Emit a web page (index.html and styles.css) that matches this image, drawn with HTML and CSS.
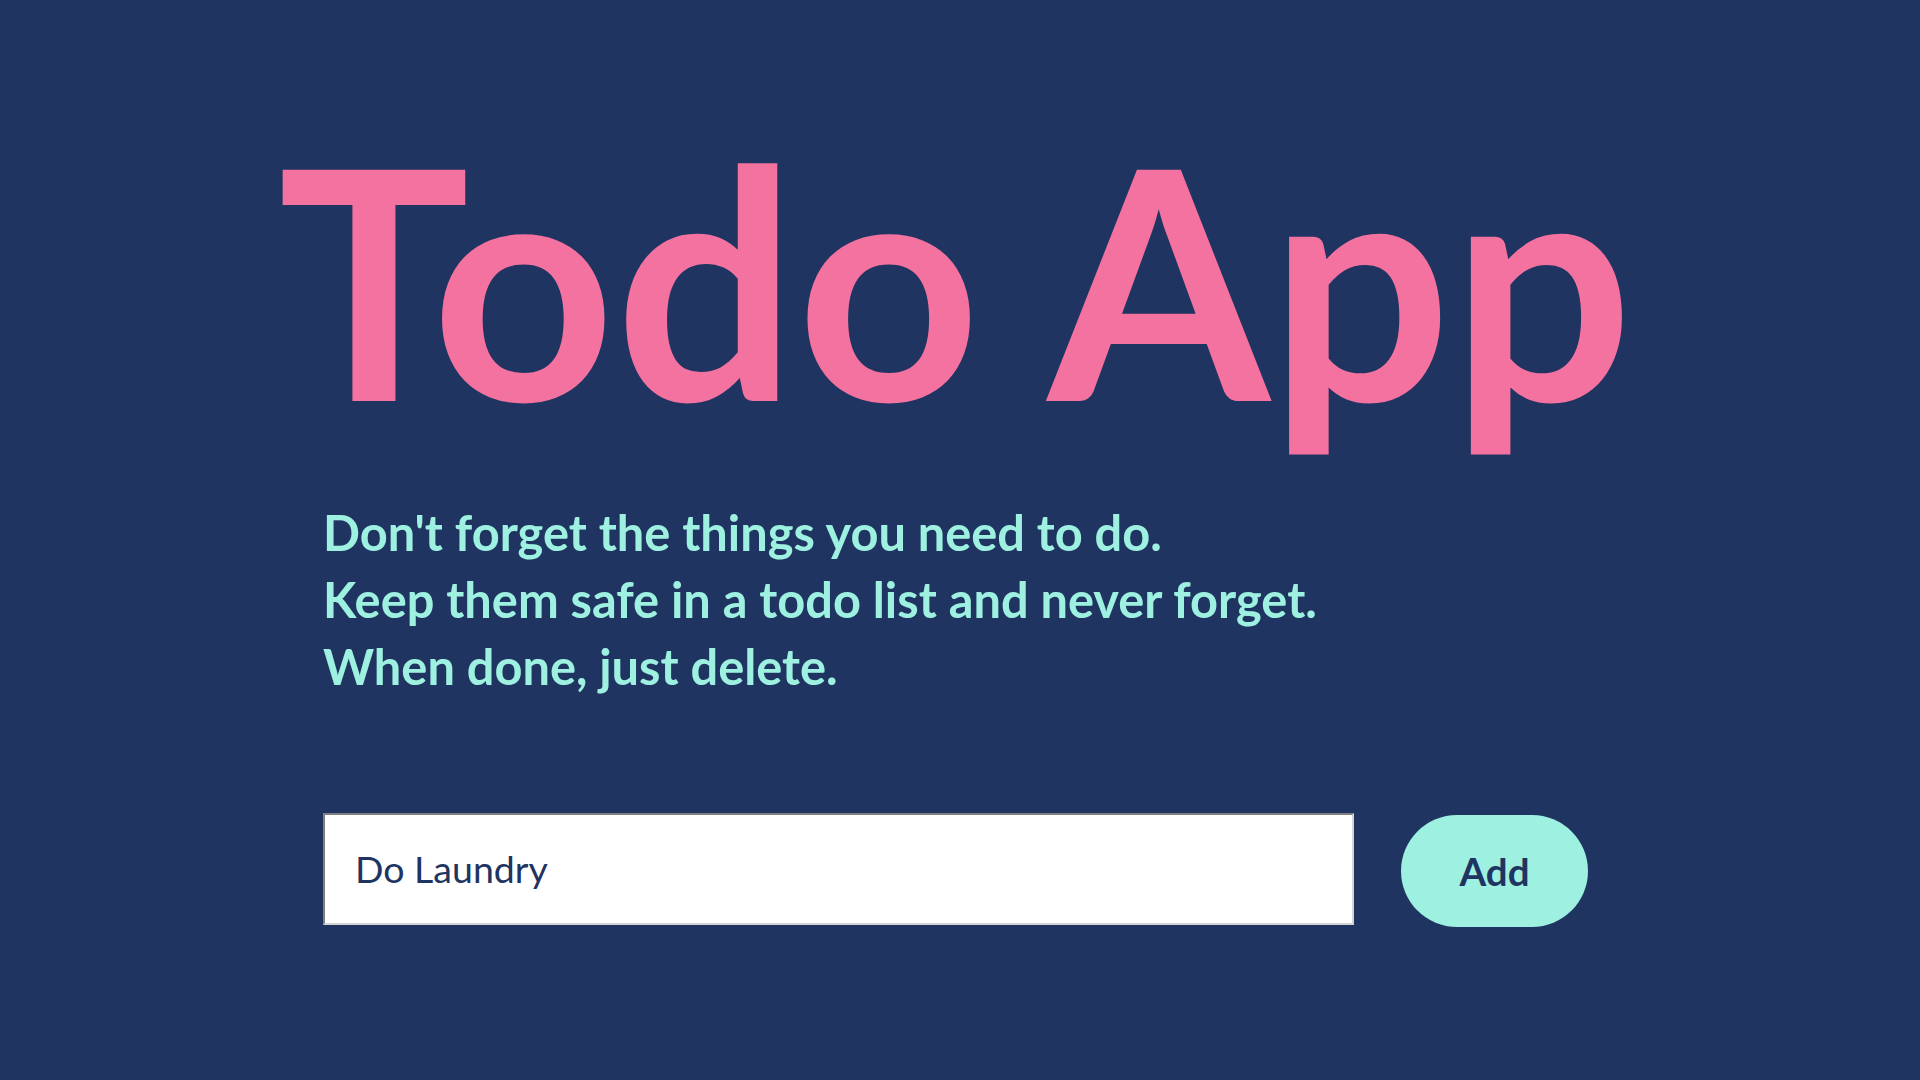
FILE: index.html
```html
<!DOCTYPE html>
<html lang="en">
<head>
<meta charset="utf-8">
<title>Todo App</title>
<link rel="stylesheet" href="styles.css">
</head>
<body>
<main class="app">
  <h1 class="title">Todo App</h1>
  <section class="content">
    <p class="intro">Don't forget the things you need to do.<br>Keep them safe in a todo list and never forget.<br>When done, just delete.</p>
    <form class="add-form">
      <input class="todo-input" type="text" value="Do Laundry">
      <button class="add-btn" type="button">Add</button>
    </form>
  </section>
</main>
</body>
</html>
```
FILE: styles.css
```css
html, body {
  margin: 0;
  padding: 0;
  height: 100%;
}
body {
  background: #1f3461;
  font-family: Lato, "Noto Sans", sans-serif;
  overflow: hidden;
}
.app {
  padding-top: 85px;
}
.title {
  margin: 0;
  padding-right: 9px;
  font-size: 320px;
  font-weight: 700;
  line-height: normal;
  color: #f472a0;
  text-align: center;
}
.content {
  width: 1274px;
  margin: 0 auto;
}
.intro {
  margin: 30px 0 0 0;
  font-size: 48.75px;
  font-weight: 700;
  line-height: 67.2px;
  color: #9ef0e0;
}
.add-form {
  display: flex;
  align-items: flex-start;
  gap: 47px;
  margin-top: 112px;
}
.todo-input {
  box-sizing: border-box;
  width: 1031px;
  height: 112px;
  padding: 0 30px;
  border: 2px inset #d4d4d4;
  background: #ffffff;
  font-family: Lato, "Noto Sans", sans-serif;
  font-size: 37.5px;
  color: #1f3461;
  outline: none;
}
.add-btn {
  width: 187px;
  height: 112px;
  margin-top: 2px;
  border: none;
  border-radius: 56px;
  background: #9ef0e0;
  color: #1f3461;
  font-family: Lato, "Noto Sans", sans-serif;
  font-size: 38.5px;
  font-weight: 700;
  padding: 0;
}
```
